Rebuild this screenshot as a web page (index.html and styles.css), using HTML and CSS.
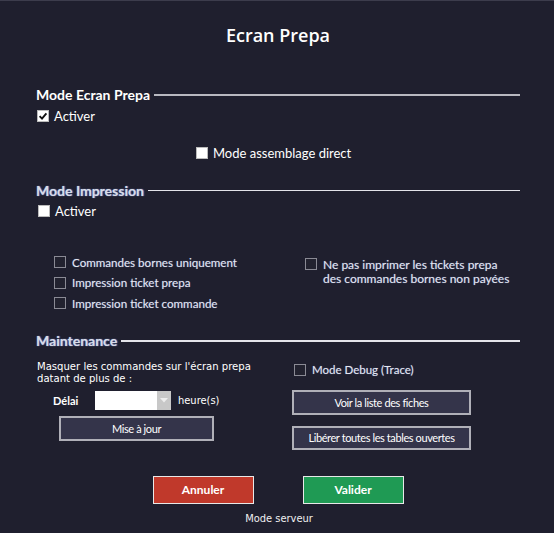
FILE: index.html
```html
<!DOCTYPE html>
<html>
<head>
<meta charset="utf-8">
<link rel="stylesheet" href="styles.css">
</head>
<body>
<div class="dialog">
  <h1 class="title">Ecran Prepa</h1>

  <div class="heading h-first"><span>Mode Ecran Prepa</span><i class="rule"></i></div>
  <label class="row activer1"><span class="cb cb-white checked"><svg viewBox="0 0 12 12" width="12" height="12"><path d="M2.6 6.2 L5 8.6 L9.4 3.4" fill="none" stroke="#111" stroke-width="1.9"/></svg></span>Activer</label>
  <label class="row assemblage"><span class="cb cb-white"></span>Mode assemblage direct</label>

  <div class="heading h-second soft"><span>Mode Impression</span><i class="rule"></i></div>
  <label class="row activer2"><span class="cb cb-white"></span>Activer</label>

  <div class="options">
    <div class="opt-left">
      <label class="opt"><span class="cb cb-dark"></span>Commandes bornes uniquement</label>
      <label class="opt"><span class="cb cb-dark"></span>Impression ticket prepa</label>
      <label class="opt"><span class="cb cb-dark"></span>Impression ticket commande</label>
    </div>
    <div class="opt-right">
      <span class="cb cb-dark"></span>
      <span class="opt-text">Ne pas imprimer les tickets prepa<br>des commandes bornes non payées</span>
    </div>
  </div>

  <div class="heading h-third soft"><span>Maintenance</span><i class="rule"></i></div>

  <div class="maint">
    <div class="maint-left">
      <p class="note">Masquer les commandes sur l'écran prepa<br>datant de plus de :</p>
      <div class="delay">
        <span class="delay-label">Délai</span>
        <span class="select"><span class="select-val"></span><span class="select-arrow"><svg viewBox="0 0 8 5" width="8" height="5"><path d="M0 0 L8 0 L4 4.5Z" fill="#eee"/></svg></span></span>
        <span class="unit">heure(s)</span>
      </div>
      <button class="btn btn-maj">Mise à jour</button>
    </div>
    <div class="maint-right">
      <label class="opt debug"><span class="cb cb-dark"></span>Mode Debug (Trace)</label>
      <button class="btn btn-wide">Voir la liste des fiches</button>
      <button class="btn btn-wide btn-second">Libérer toutes les tables ouvertes</button>
    </div>
  </div>

  <div class="footer">
    <button class="fbtn cancel">Annuler</button>
    <button class="fbtn ok">Valider</button>
  </div>
  <div class="mode">Mode serveur</div>
</div>
</body>
</html>
```

FILE: styles.css
```css
html, body {
  margin: 0;
  padding: 0;
}
body {
  width: 554px;
  height: 533px;
  background: #1f1f2e;
  border-top: 1px solid #3c3c4c;
  box-sizing: border-box;
  overflow: hidden;
  font-family: Lato, "Liberation Sans", sans-serif;
  color: #f2f2f2;
}
.dialog {
  padding: 0 34px 0 36px;
}
.title {
  margin: 0;
  height: 68px;
  line-height: 68px;
  text-align: center;
  font-family: "Open Sans", Lato, sans-serif;
  font-weight: 600;
  font-size: 18px;
  color: #fff;
}
.heading {
  display: flex;
  align-items: center;
  height: 16px;
  font-weight: 700;
  font-size: 14px;
  color: #fff;
}
.heading span {
  white-space: nowrap;
  margin-right: 4px;
}
.heading .rule {
  flex: 1;
  height: 2px;
  background: #b8b8c0;
  margin-top: 1px;
}
.soft span {
  color: #d9dce6;
  text-shadow: 0 0 1px #7b8cc0, 1px 0 1px #4a5a90;
}
.h-second .rule, .h-third .rule {
  background: #e4e4ea;
  height: 1.5px;
}
.h-first { margin-top: 17px; }
.h-second { margin-top: 21px; }
.h-third { margin-top: 19px; }

.row {
  display: flex;
  align-items: center;
  height: 16px;
  font-size: 13px;
  color: #fff;
}
.activer1 { margin-top: 6px; padding-left: 1px; }
.assemblage { margin-top: 21px; padding-left: 160px; }
.activer2 { margin-top: 5px; padding-left: 2px; }

.cb {
  display: inline-block;
  flex: none;
  box-sizing: border-box;
}
.cb-white {
  width: 12px;
  height: 12px;
  background: #fff;
  border: 1px solid #bbb;
  margin-right: 5px;
}
.cb-white svg {
  display: block;
  margin: -1px;
}
.cb-dark {
  width: 12px;
  height: 12px;
  border: 1px solid #8a8a94;
  background: #22222f;
  margin-right: 6px;
}

.options {
  display: flex;
  margin-top: 33px;
  padding-left: 18px;
}
.opt-left {
  width: 251px;
}
.opt {
  display: flex;
  align-items: center;
  height: 20.5px;
  font-size: 11.6px;
  color: #e4e6ee;
  text-shadow: 0 0 1px #5d6ea8;
}
.opt-right {
  display: flex;
  align-items: flex-start;
  padding-top: 6px;
}
.opt-text {
  font-size: 12px;
  line-height: 14px;
  color: #e4e6ee;
  text-shadow: 0 0 1px #5d6ea8;
}

.maint {
  display: flex;
  margin-top: 12px;
  padding-left: 1px;
}
.maint-left {
  width: 255px;
}
.note {
  margin: 0;
  font-family: "DejaVu Sans Condensed", "DejaVu Sans", sans-serif;
  font-size: 11.2px;
  line-height: 12px;
  color: #fff;
}
.delay {
  display: flex;
  align-items: center;
  margin-top: 6px;
  height: 19px;
}
.delay-label {
  width: 42px;
  padding-left: 16px;
  font-size: 11px;
  font-weight: 700;
  color: #fff;
  flex: none;
}
.select {
  display: flex;
  width: 76px;
  height: 19px;
  background: #fff;
  flex: none;
}
.select-val { flex: 1; }
.select-arrow {
  width: 14px;
  background: #c8c8c8;
  display: flex;
  align-items: center;
  justify-content: center;
}
.unit {
  margin-left: 7px;
  font-family: "DejaVu Sans Condensed", "DejaVu Sans", sans-serif;
  font-size: 11px;
  color: #fff;
}
.btn {
  display: block;
  box-sizing: border-box;
  background: #34344a;
  border: 2px solid #b0b0b8;
  color: #fff;
  font-family: Lato, sans-serif;
  font-size: 11px;
  letter-spacing: -0.4px;
  padding: 0;
}
.btn-maj {
  width: 155px;
  height: 25px;
  margin-top: 6px;
  margin-left: 22px;
}
.debug {
  height: 16px;
  margin-top: 1px;
  margin-left: 2px;
  font-size: 11.5px;
  width: 200px;
}
.btn-wide {
  width: 179px;
  height: 25px;
  margin-top: 12px;
}
.btn-second {
  height: 24px;
  margin-top: 11px;
}

.footer {
  display: flex;
  justify-content: center;
  gap: 49px;
  margin-top: 26px;
}
.fbtn {
  width: 101px;
  height: 28px;
  box-sizing: border-box;
  border: 1px solid #e8e8e8;
  color: #fff;
  font-family: Lato, sans-serif;
  font-weight: 700;
  font-size: 12px;
  padding: 0;
}
.cancel { background: #c0392b; }
.ok { background: #1f9a54; }
.mode {
  text-align: center;
  margin-top: 8px;
  font-family: "DejaVu Sans Condensed", "DejaVu Sans", sans-serif;
  font-size: 11px;
  color: #f0f0f0;
  padding-left: 2px;
}
```
